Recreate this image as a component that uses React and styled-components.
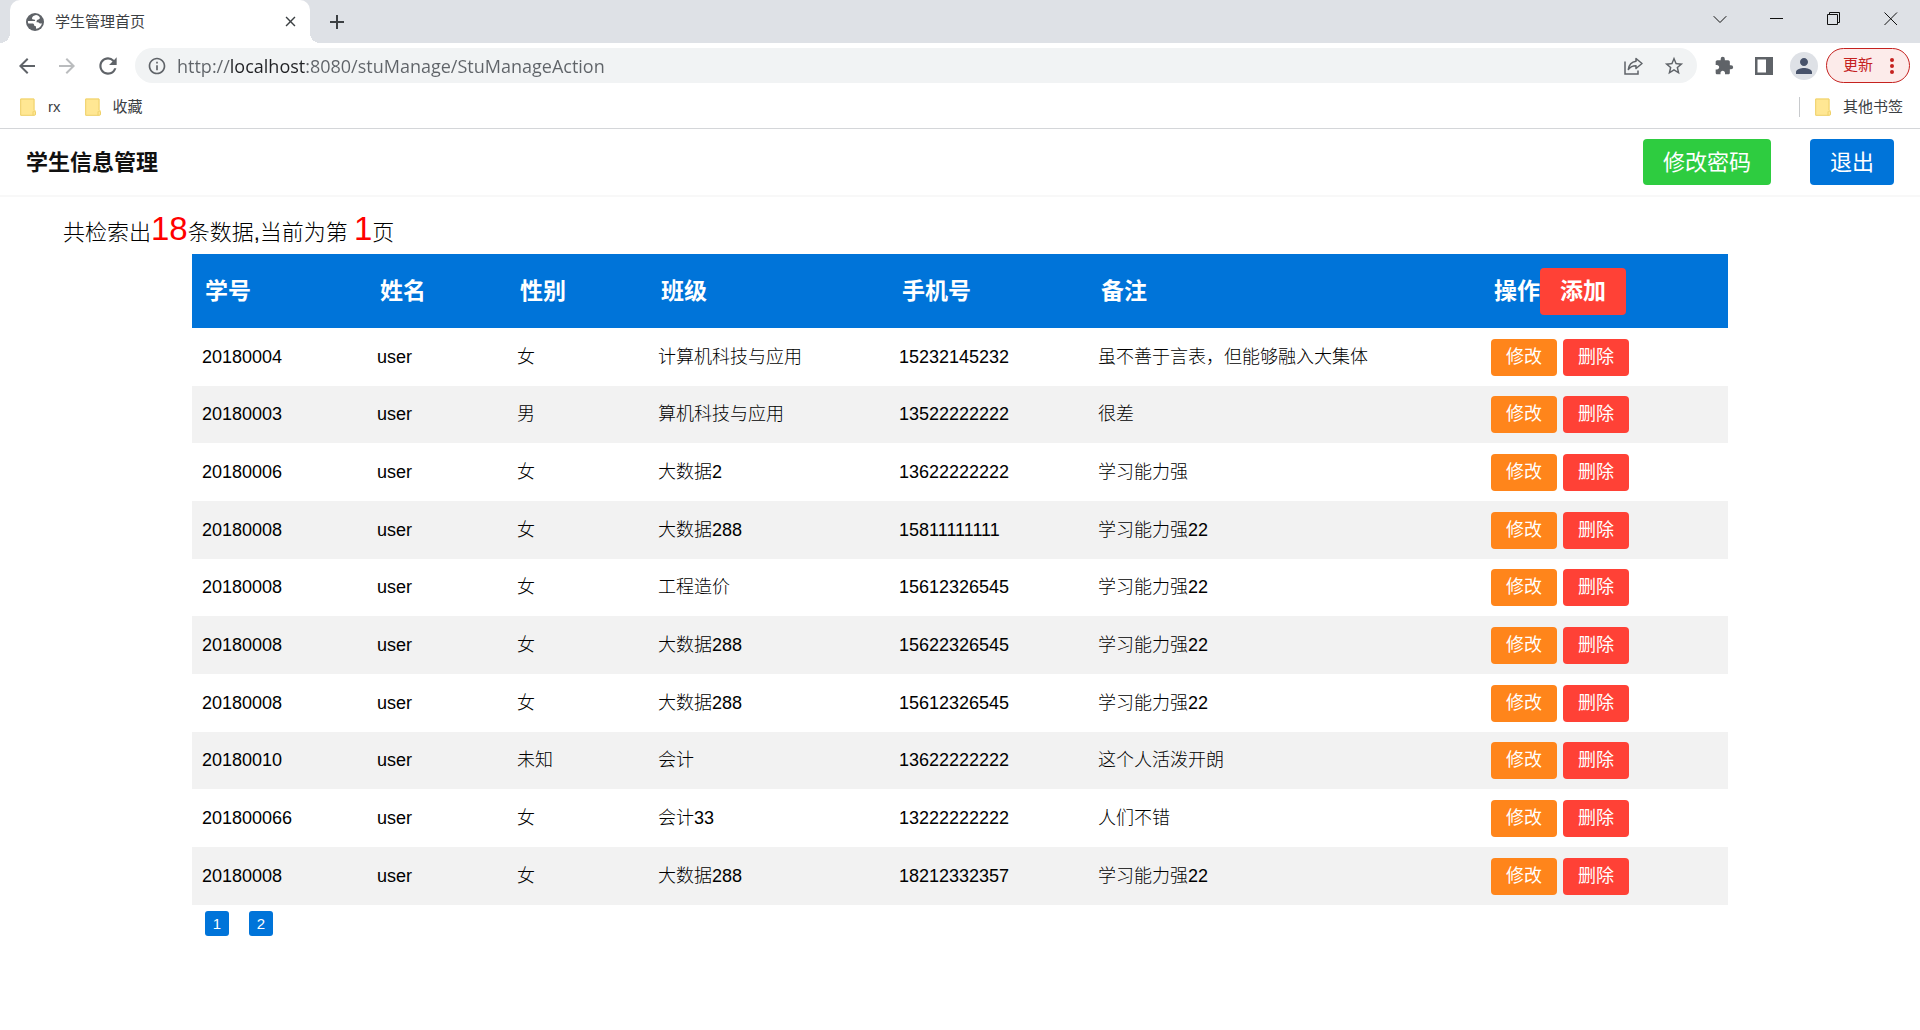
import styled, { createGlobalStyle } from 'styled-components'
import {
  MdAdd,
  MdArrowBack,
  MdArrowForward,
  MdClose,
  MdExtension,
  MdInfoOutline,
  MdPerson,
  MdRefresh,
  MdStarOutline,
} from 'react-icons/md'

const students = [
  { no: '20180004', name: 'user', sex: '女', grade: '计算机科技与应用', phone: '15232145232', remark: '虽不善于言表，但能够融入大集体' },
  { no: '20180003', name: 'user', sex: '男', grade: '算机科技与应用', phone: '13522222222', remark: '很差' },
  { no: '20180006', name: 'user', sex: '女', grade: '大数据2', phone: '13622222222', remark: '学习能力强' },
  { no: '20180008', name: 'user', sex: '女', grade: '大数据288', phone: '15811111111', remark: '学习能力强22' },
  { no: '20180008', name: 'user', sex: '女', grade: '工程造价', phone: '15612326545', remark: '学习能力强22' },
  { no: '20180008', name: 'user', sex: '女', grade: '大数据288', phone: '15622326545', remark: '学习能力强22' },
  { no: '20180008', name: 'user', sex: '女', grade: '大数据288', phone: '15612326545', remark: '学习能力强22' },
  { no: '20180010', name: 'user', sex: '未知', grade: '会计', phone: '13622222222', remark: '这个人活泼开朗' },
  { no: '201800066', name: 'user', sex: '女', grade: '会计33', phone: '13222222222', remark: '人们不错' },
  { no: '20180008', name: 'user', sex: '女', grade: '大数据288', phone: '18212332357', remark: '学习能力强22' },
]

const GlobeIcon = () => (
  <svg width="18" height="18" viewBox="0 0 18 18" aria-hidden="true">
    <circle cx="9" cy="9" r="9" fill="#5f6368" />
    <path
      d="M10 2C8 2.300 6.300 3.500 6 5c-.2 1.200.8 1.500 2 1.600 1 .1 1.300.6 1 1.400H4.500L2 8c-.2 1 0 1.500.3 2.500h4c1.200 0 1.800.6 1.900 1.700 0 .9.900 1 1.800 1.100v2.500c3.200-.4 5.500-2.600 6-5.600-1 .5-2 .4-2.800-.3-.7-.6-1.700-.7-2.700-.7 0-1.700.5-2.700 2-2.800 1-.1 1.500-.8 1.300-1.800C13 3 11.800 2.200 10 2z"
      fill="#fff"
    />
  </svg>
)

const FolderIcon = () => (
  <svg width="16" height="18" viewBox="0 0 16 18" aria-hidden="true">
    <path d="M1 .5h12.500a1 1 0 0 1 1 1V12h.5a.8.8 0 0 1 .8.8V16a1.500 1.500 0 0 1-1.500 1.500H1a.8.8 0 0 1-.8-.8V1.300A.8.8 0 0 1 1 .5z" fill="#ffe793" />
    <path d="M.7 17.300V1h13.300v11M13 17.300v-3.500a1.400 1.400 0 0 1 2.500 0v2.200a1.300 1.300 0 0 1-1.300 1.300H.7" fill="none" stroke="#eed06a" strokeWidth="1" />
  </svg>
)

const ShareIcon = () => (
  <svg width="20" height="20" viewBox="0 0 20 20" fill="none" stroke="#5f6368" strokeWidth="1.500" aria-hidden="true">
    <path d="M2 5.500v12.500h13v-3.500" />
    <path d="M13 2.500l6 5-6 5V9.800c-3.500 0-5.700 1-7.700 3.700.6-4.300 3-7.500 7.700-8.200z" strokeLinejoin="round" />
  </svg>
)

const SidePanelIcon = () => (
  <svg width="18" height="18" viewBox="0 0 18 18" aria-hidden="true">
    <path fillRule="evenodd" d="M0 0h18v18H0zM2.500 2.500v13h8.500v-13z" fill="#5f6368" />
  </svg>
)

const App = () => {
  return (
    <Container>
      <TabBar>
        <Tab>
          <GlobeIcon />
          <span>学生管理首页</span>
          <IconButton $size={18} aria-label="关闭标签页">
            <MdClose size={17} />
          </IconButton>
        </Tab>
        <IconButton $size={24} aria-label="新标签页">
          <MdAdd size={24} />
        </IconButton>
        <WindowButtons>
          <button aria-label="搜索标签页">
            <svg width="14" height="14" viewBox="0 0 14 14"><path d="M.7 4.200L7 10.500l6.300-6.300" /></svg>
          </button>
          <button aria-label="最小化">
            <svg width="14" height="14" viewBox="0 0 14 14"><path d="M0 6.500h13" /></svg>
          </button>
          <button aria-label="还原">
            <svg width="14" height="14" viewBox="0 0 14 14"><path d="M.5 2.500h10v10H.5zM2.500 2.500v-2h10v10h-2" /></svg>
          </button>
          <button aria-label="关闭">
            <svg width="14" height="14" viewBox="0 0 14 14"><path d="M.5.5l12.500 12.500M13 .5L.5 13" /></svg>
          </button>
        </WindowButtons>
      </TabBar>

      <Toolbar>
        <NavButtons>
          <IconButton $size={24} aria-label="后退"><MdArrowBack size={24} /></IconButton>
          <IconButton $size={24} aria-label="前进" disabled><MdArrowForward size={24} /></IconButton>
          <IconButton $size={26} aria-label="重新加载"><MdRefresh size={26} /></IconButton>
        </NavButtons>
        <AddressBar>
          <MdInfoOutline size={20} />
          <AddressInput aria-label="地址" defaultValue="http://localhost:8080/stuManage/StuManageAction" />
          <IconButton $size={20} aria-label="分享"><ShareIcon /></IconButton>
          <IconButton $size={22} aria-label="添加书签"><MdStarOutline size={22} /></IconButton>
        </AddressBar>
        <ToolButtons>
          <IconButton $size={20} aria-label="扩展程序"><MdExtension size={20} /></IconButton>
          <IconButton $size={20} aria-label="侧边栏"><SidePanelIcon /></IconButton>
          <Avatar aria-label="用户"><MdPerson size={24} /></Avatar>
        </ToolButtons>
        <UpdateButton>
          更新
          <svg width="4" height="16" viewBox="0 0 4 16" fill="#c5221f" aria-hidden="true">
            <circle cx="2" cy="2" r="2" />
            <circle cx="2" cy="8" r="2" />
            <circle cx="2" cy="14" r="2" />
          </svg>
        </UpdateButton>
      </Toolbar>

      <Bookmarks>
        <Bookmark href="#"><FolderIcon />rx</Bookmark>
        <Bookmark href="#"><FolderIcon />收藏</Bookmark>
        <OtherBookmarks>
          <Bookmark href="#"><FolderIcon />其他书签</Bookmark>
        </OtherBookmarks>
      </Bookmarks>

      <Header>
        <h1>学生信息管理</h1>
        <HeaderButton $color="#2ecc40">修改密码</HeaderButton>
        <HeaderButton $color="#0074d9">退出</HeaderButton>
      </Header>

      <Main>
        <Summary>
          共检索出<em>18</em>条数据,当前为第 <em>1</em>页
        </Summary>
        <Content>
          <Table>
            <colgroup>
              <Col $width={175} />
              <Col $width={140} />
              <Col $width={141} />
              <Col $width={241} />
              <Col $width={199} />
              <Col $width={393} />
              <Col $width={247} />
            </colgroup>
            <thead>
              <tr>
                <th>学号</th>
                <th>姓名</th>
                <th>性别</th>
                <th>班级</th>
                <th>手机号</th>
                <th>备注</th>
                <th>操作<AddButton>添加</AddButton></th>
              </tr>
            </thead>
            <tbody>
              {students.map((student, index) => (
                <tr key={index}>
                  <td>{student.no}</td>
                  <td>{student.name}</td>
                  <td>{student.sex}</td>
                  <td>{student.grade}</td>
                  <td>{student.phone}</td>
                  <td>{student.remark}</td>
                  <td>
                    <Actions>
                      <RowButton $color="#ff851b">修改</RowButton>
                      <RowButton $color="#ff4136">删除</RowButton>
                    </Actions>
                  </td>
                </tr>
              ))}
            </tbody>
          </Table>
          <Pagination>
            <PageLink href="#1">1</PageLink>
            <PageLink href="#2">2</PageLink>
          </Pagination>
        </Content>
      </Main>
      <GlobalStyle />
    </Container>
  )
}

export default App;

const GlobalStyle = createGlobalStyle`
  * {
    box-sizing: border-box;
  }
  body {
    margin: 0;
    background-color: #fff;
    color: #111;
    font-family: 'Liberation Sans', 'Noto Sans CJK SC', sans-serif;
    line-height: 1.5;
  }
  button {
    border: none;
    padding: 0;
    font-family: inherit;
    line-height: inherit;
    cursor: pointer;
  }
`

const Container = styled.div`
  display: flex;
  flex-direction: column;
  width: 100%;
  min-height: 100vh;
`

const TabBar = styled.div`
  display: flex;
  align-items: center;
  height: 43px;
  padding-left: 10px;
  background-color: #dee1e6;
  color: #3c4043;
`

const Tab = styled.div`
  position: relative;
  display: flex;
  align-items: center;
  gap: 11px;
  width: 300px;
  height: 43px;
  margin-right: 15px;
  padding: 0 11px 0 16px;
  border-radius: 10px 10px 0 0;
  background-color: #fff;
  font-size: 15px;
  line-height: 24px;
  span {
    margin-right: auto;
  }
  &::before,
  &::after {
    content: '';
    position: absolute;
    bottom: 0;
    width: 10px;
    height: 10px;
  }
  &::before {
    right: 100%;
    background: radial-gradient(circle at 0 0, transparent 10px, #fff 10px);
  }
  &::after {
    left: 100%;
    background: radial-gradient(circle at 100% 0, transparent 10px, #fff 10px);
  }
`

const IconButton = styled.button`
  display: flex;
  align-items: center;
  justify-content: center;
  width: ${({ $size }) => $size}px;
  height: ${({ $size }) => $size}px;
  background: none;
  color: inherit;
  svg {
    flex-shrink: 0;
  }
  &:disabled {
    color: #babcbe;
  }
`

const WindowButtons = styled.div`
  display: flex;
  align-self: flex-start;
  margin-left: auto;
  padding-right: 1px;
  button {
    display: flex;
    align-items: center;
    justify-content: center;
    width: 57px;
    height: 37px;
    background: none;
  }
  path {
    fill: none;
    stroke: #111;
  }
`

const Toolbar = styled.div`
  display: flex;
  align-items: center;
  height: 45px;
  padding: 0 10px 0 15px;
  color: #5f6368;
`

const NavButtons = styled.div`
  display: flex;
  align-items: center;
  gap: 16px;
  margin-right: 14px;
`

const AddressBar = styled.div`
  display: flex;
  flex: 1;
  align-items: center;
  gap: 20px;
  height: 35px;
  padding: 0 12px;
  border-radius: 18px;
  background-color: #f1f3f4;
`

/* the host part of the address is darker than the rest */
const AddressInput = styled.input`
  flex: 1;
  min-width: 0;
  margin-left: -10px;
  padding: 0;
  border: none;
  outline: none;
  background: linear-gradient(90deg, #5f6368 53px, #202124 53px 128px, #5f6368 128px);
  background-clip: text;
  color: transparent;
  font-family: 'Open Sans', sans-serif;
  font-size: 18px;
`

const ToolButtons = styled.div`
  display: flex;
  align-items: center;
  gap: 20px;
  margin: 0 8px 0 17px;
`

const Avatar = styled.button`
  display: flex;
  align-items: center;
  justify-content: center;
  width: 28px;
  height: 28px;
  margin-left: -4px;
  border-radius: 50%;
  background-color: #dee1e6;
  color: #47526a;
`

const UpdateButton = styled.button`
  display: flex;
  align-items: center;
  gap: 17px;
  height: 35px;
  padding: 0 15px 0 16px;
  border: 1px solid #c5221f;
  border-radius: 18px;
  background-color: #fcebea;
  color: #c5221f;
  font-size: 15px;
`

const Bookmarks = styled.nav`
  display: flex;
  align-items: center;
  gap: 24px;
  height: 41px;
  padding: 0 17px 2px 20px;
  border-bottom: 1px solid #d4d6d9;
`

const Bookmark = styled.a`
  display: flex;
  align-items: center;
  gap: 12px;
  color: #3c4043;
  font-size: 15px;
  line-height: 20px;
  text-decoration: none;
`

const OtherBookmarks = styled.div`
  margin-left: auto;
  padding-left: 15px;
  border-left: 1px solid #c8cacd;
`

const Header = styled.header`
  display: flex;
  align-items: center;
  gap: 39px;
  height: 68px;
  padding: 0 26px;
  border-bottom: 2px solid #f8f8f8;
  h1 {
    margin: 0 auto 0 0;
    font-size: 22px;
    font-weight: 700;
  }
`

const Button = styled.button`
  border-radius: 4px;
  background-color: ${({ $color }) => $color};
  color: #fff;
`

const HeaderButton = styled(Button)`
  height: 46px;
  padding: 0 20px;
  font-size: 22px;
`

const AddButton = styled(Button).attrs({ $color: '#ff4136' })`
  height: 47px;
  padding: 0 20px;
  font-size: 23px;
  font-weight: 700;
`

const RowButton = styled(Button)`
  height: 37px;
  padding: 0 15px;
  font-size: 18px;
`

const Main = styled.main`
  padding-top: 12px;
  color: #000;
  font-weight: 300;
`

const Summary = styled.p`
  margin: 0;
  padding-left: 63px;
  font-size: 22px;
  line-height: 43px;
  em {
    color: #f00;
    font-size: 33px;
    font-style: normal;
    line-height: 40px;
  }
`

const Content = styled.div`
  width: 80%;
  margin: 0 auto;
`

const Table = styled.table`
  width: 100%;
  table-layout: fixed;
  border-collapse: collapse;
  text-align: left;
  th {
    height: 74px;
    padding: 0 13px;
    background-color: #0074d9;
    color: #fff;
    font-size: 23px;
    font-weight: 700;
  }
  td {
    height: 58px;
    padding: 0 10px;
    font-size: 18px;
  }
  tbody tr:nth-child(even) {
    background-color: #f2f2f2;
  }
  tbody tr:nth-child(3n + 2) td {
    height: 57px;
  }
`

const Col = styled.col`
  width: ${({ $width }) => $width}px;
`

const Actions = styled.div`
  display: flex;
  gap: 6px;
`

const Pagination = styled.nav`
  display: flex;
  gap: 20px;
  padding: 6px 13px;
`

const PageLink = styled.a`
  width: 24px;
  border-radius: 3px;
  background-color: #0074d9;
  color: #fff;
  font-size: 15px;
  line-height: 25px;
  text-align: center;
  text-decoration: none;
`
